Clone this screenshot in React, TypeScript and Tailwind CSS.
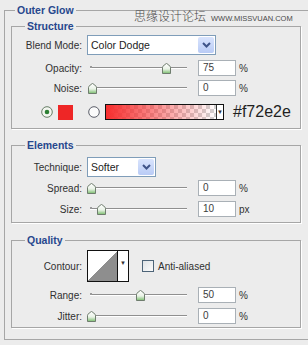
import React from "react";

type SliderRowProps = {
  label: string;
  value: string;
  unit: string;
  thumb: number;
  tick?: boolean;
  className?: string;
};

function Thumb({ x }: { x: number }) {
  return (
    <svg
      width="9"
      height="11"
      viewBox="0 0 9 11"
      className="absolute top-[3px]"
      style={{ left: x - 4 }}
    >
      <defs>
        <linearGradient id="thumbFill" x1="0" y1="0" x2="0" y2="1">
          <stop offset="0" stopColor="#ffffff" />
          <stop offset="0.55" stopColor="#e9f2e6" />
          <stop offset="1" stopColor="#79bd6c" />
        </linearGradient>
      </defs>
      <path
        d="M0.5 10.5V4.3Q0.5 3.6 1 3.2L4 0.7Q4.5 0.3 5 0.7L8 3.2Q8.5 3.6 8.5 4.3V10.5Z"
        fill="url(#thumbFill)"
        stroke="#6f7d6e"
      />
    </svg>
  );
}

function NumberBox({ value }: { value: string }) {
  return (
    <div className="w-[38px] h-4 border border-[#a9b0b6] bg-white pl-[4px] text-[10px] leading-[14px] text-[#3c3c3c]">
      {value}
    </div>
  );
}

function SliderRow({ label, value, unit, thumb, tick, className }: SliderRowProps) {
  return (
    <div className={`flex items-center h-4 ${className ?? ""}`}>
      <span className="w-[70px] text-right">{label}</span>
      <div className="relative ml-[5px] w-[111px] h-4">
        <div className="absolute left-[3px] top-[7px] w-[97px] h-px bg-[#8f8f8f] shadow-[0_1px_0_#fff]" />
        {tick && <div className="absolute left-[3px] top-[6px] w-[2px] h-[2px] bg-[#9a9a9a]" />}
        <Thumb x={thumb} />
      </div>
      <NumberBox value={value} />
      <span className="ml-[3px]">{unit}</span>
    </div>
  );
}

function Select({ value, width }: { value: string; width: string }) {
  return (
    <div className={`flex h-5 border border-[#7f9db9] bg-white ${width}`}>
      <span className="flex-1 pl-[3px] text-[10.5px] leading-[18px] text-[#222]">{value}</span>
      <span className="flex w-4 m-px items-center justify-center rounded-[2px] bg-[linear-gradient(#d9e4fd,#b9cbf5)]">
        <svg width="9" height="6" viewBox="0 0 9 6">
          <path d="M1 1l3.5 3.5L8 1" stroke="#3f5488" strokeWidth="2" fill="none" />
        </svg>
      </span>
    </div>
  );
}

function Legend({ children, className }: { children: React.ReactNode; className: string }) {
  return (
    <legend className={`px-[2px] text-[10.5px] leading-[14px] font-bold text-[#27478d] ${className}`}>
      {children}
    </legend>
  );
}

export default function App() {
  return (
    <div className="relative w-[308px] h-[345px] overflow-hidden bg-[#ececec] font-['Liberation_Sans',Arial,sans-serif] text-[10px] text-[#303030]">
      <div className="absolute left-[134px] top-[7px] flex items-baseline text-[#4a4a4a]">
        <span className="text-[12px] font-['Noto_Sans_CJK_SC',sans-serif] font-light">思缘设计论坛</span>
        <span className="ml-[5px] text-[7.5px]">WWW.MISSVUAN.COM</span>
      </div>

      <fieldset className="mt-[3px] ml-[4px] w-[320px] border border-[#a6a6a6] pb-[11px]">
        <Legend className="ml-[10px]">Outer Glow</Legend>

        <fieldset className="mt-[2px] ml-[6px] w-[290px] border border-[#a6a6a6] shadow-[1px_1px_0_#fff] pb-[8px]">
          <Legend className="ml-[13px]">Structure</Legend>
          <div className="flex items-center mt-[2px]">
            <span className="w-[70px] text-right">Blend Mode:</span>
            <div className="ml-[5px]">
              <Select value="Color Dodge" width="w-[129px]" />
            </div>
          </div>
          <SliderRow label="Opacity:" value="75" unit="%" thumb={79} tick className="mt-[5px]" />
          <SliderRow label="Noise:" value="0" unit="%" thumb={5} className="mt-[4px]" />
          <div className="flex items-center h-4 mt-[8px]">
            <svg width="12" height="12" viewBox="0 0 12 12" className="ml-[29px]">
              <circle cx="6" cy="6" r="5.3" fill="#f3f5f0" stroke="#667e66" />
              <circle cx="6" cy="6" r="2.3" fill="#2b7f32" />
            </svg>
            <div className="ml-[5px] w-[15px] h-[15px] bg-[#ee2626]" />
            <svg width="12" height="12" viewBox="0 0 12 12" className="ml-[15px]">
              <circle cx="6" cy="6" r="5.3" fill="#fbfbfb" stroke="#5c5f6a" />
            </svg>
            <div className="ml-[5px] flex w-[119px] h-[16px] border-[1.5px] border-[#111]">
              <div className="flex-1 bg-[image:linear-gradient(to_right,#f72e2e,rgba(247,46,46,0)),repeating-conic-gradient(#d2d2d2_0_25%,#ffffff_0_50%)] bg-[length:100%_100%,8px_8px]" />
              <div className="flex w-[7px] items-center justify-center border-l border-[#333] bg-white text-[6px] leading-none">▼</div>
            </div>
            <span className="ml-[9px] text-[16px] leading-none text-[#1f1f1f]">#f72e2e</span>
          </div>
        </fieldset>

        <fieldset className="mt-[9px] ml-[6px] w-[290px] border border-[#a6a6a6] shadow-[1px_1px_0_#fff] pb-[5px]">
          <Legend className="ml-[13px]">Elements</Legend>
          <div className="flex items-center mt-[5px]">
            <span className="w-[70px] text-right">Technique:</span>
            <div className="ml-[5px]">
              <Select value="Softer" width="w-[69px]" />
            </div>
          </div>
          <SliderRow label="Spread:" value="0" unit="%" thumb={4} className="mt-[3px]" />
          <SliderRow label="Size:" value="10" unit="px" thumb={14} tick className="mt-[5px]" />
        </fieldset>

        <fieldset className="mt-[10px] ml-[6px] w-[290px] border border-[#a6a6a6] shadow-[1px_1px_0_#fff] pb-[3px]">
          <Legend className="ml-[13px]">Quality</Legend>
          <div className="flex items-center h-8 mt-[3px]">
            <span className="w-[70px] text-right">Contour:</span>
            <div className="ml-[5px] flex w-[42px] h-8 border border-[#111] bg-white">
              <div className="flex-1 bg-[image:linear-gradient(to_top_left,#8e8e8e_50%,#ffffff_50%)]" />
              <div className="w-[11px] border-l border-[#111] bg-white pt-[9px] text-center text-[6px] leading-none">▼</div>
            </div>
            <div className="ml-[13px] w-[12px] h-[12px] border border-[#4d6478] bg-[linear-gradient(135deg,#dfe3e6,#fbfbfb)]" />
            <span className="ml-[4px]">Anti-aliased</span>
          </div>
          <SliderRow label="Range:" value="50" unit="%" thumb={53} tick className="mt-[5px]" />
          <SliderRow label="Jitter:" value="0" unit="%" thumb={4} className="mt-[5px]" />
        </fieldset>
      </fieldset>
    </div>
  );
}
